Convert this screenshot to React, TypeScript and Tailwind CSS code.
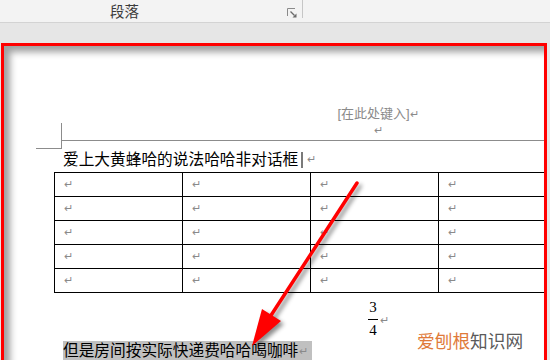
const cjk = { fontFamily: '"Liberation Sans", "Noto Sans CJK SC", sans-serif' };

const Mark = ({ className = "" }: { className?: string }) => (
  <span className={`text-[11px] leading-none text-[#8a8a8a] ${className}`}>↵</span>
);

const rows = [0, 1, 2, 3, 4];
const cols = [0, 1, 2, 3];

const App = () => {
  return (
    <div
      className="relative w-[550px] h-[360px] overflow-hidden bg-[#e6e6e6] text-black"
      style={cjk}
    >
      {/* ribbon */}
      <div className="h-[23px] bg-[#f3f3f3] border-b border-[#d3d3d3]">
        <div className="flex items-center w-[303px] h-[18px] border-r border-[#c6c6c6]">
          <span className="ml-[110px] mt-[6px] text-[14.5px] leading-[18px] text-[#3a3a3a]">
            段落
          </span>
          <svg width="10" height="10" viewBox="0 0 10 10" className="ml-auto mr-[5px] mt-[7px]">
            <path d="M0.5 8V0.5H8" fill="none" stroke="#8a8a8a" strokeWidth="1" />
            <path d="M3.5 3.5L7.5 7.5" stroke="#6a6a6a" strokeWidth="1.2" />
            <path d="M9.5 9.5H5.5L9.5 5.5Z" fill="#6a6a6a" />
          </svg>
        </div>
      </div>
      <div className="h-[20px]" />

      {/* document page */}
      <div className="relative ml-[1px] w-[546px] h-[330px] border-[3px] border-[#ff0000] bg-white overflow-hidden shadow-[inset_6px_6px_7px_rgba(0,0,0,0.38)]">
        <div className="h-[95px] w-[632px] ml-[58px] border-b border-[#8c8c8c] flex flex-col items-center justify-end pb-[2px]">
          <div className="text-[13px] leading-[16px] text-[#8a8a8a] flex items-center">
            [在此处键入]
            <Mark />
          </div>
          <div className="h-[16px] flex items-center">
            <Mark />
          </div>
        </div>
        <div className="absolute left-[32px] top-[77px] w-[26px] h-[26px] border-r border-b border-[#8c8c8c]" />

        <div className="ml-[59px] pt-[6px] h-[31px] flex items-center text-[15.7px] leading-[24px]">
          爱上大黄蜂哈的说法哈哈非对话框
          <span className="ml-[3px] w-[2px] h-[16px] bg-[#7a7a7a]" />
          <Mark className="ml-[4px]" />
        </div>

        <div className="ml-[50px] w-[513px] grid grid-cols-4 border-l border-t border-black">
          {rows.map((r) =>
            cols.map((c) => (
              <div
                key={`${r}-${c}`}
                className="h-[24px] border-r border-b border-black flex items-center pl-[9px]"
              >
                <Mark />
              </div>
            ))
          )}
        </div>

        <div className="ml-[364px] mt-[7px] flex items-center">
          <div className="flex flex-col items-center" style={{ fontFamily: '"Liberation Serif", serif' }}>
            <span className="text-[15px] leading-[14px] h-[14px]">3</span>
            <span className="mt-[5px] w-[10px] h-[1px] bg-black" />
            <span className="mt-[3px] text-[15px] leading-[14px] h-[14px]">4</span>
          </div>
          <Mark className="ml-[2px] mt-[4px]" />
        </div>

        <div className="ml-[59px] mt-[4px] flex">
          <span className="bg-[#c0c0c0] pr-[4px] flex items-center text-[15.7px] leading-[20px]">
            但是房间按实际快递费哈哈喝咖啡
            <Mark className="ml-[1px]" />
          </span>
        </div>
      </div>

      {/* watermark */}
      <div className="absolute left-[417px] top-[332px] text-[17.7px] leading-[20px]">
        <span className="text-[#e07a3a]">爱刨根</span>
        <span className="text-[#5a5a5a]">知识网</span>
      </div>

      {/* red arrow annotation */}
      <svg
        className="absolute inset-0 pointer-events-none"
        width="550"
        height="360"
        style={{ filter: "drop-shadow(3px 3px 2px rgba(0,0,0,0.45))" }}
      >
        <line x1="357" y1="183" x2="268" y2="320" stroke="#ff0000" strokeWidth="3.5" strokeLinecap="round" />
        <path d="M252 346L262 309L281 321Z" fill="#ff0000" />
      </svg>
    </div>
  );
};

export default App;
